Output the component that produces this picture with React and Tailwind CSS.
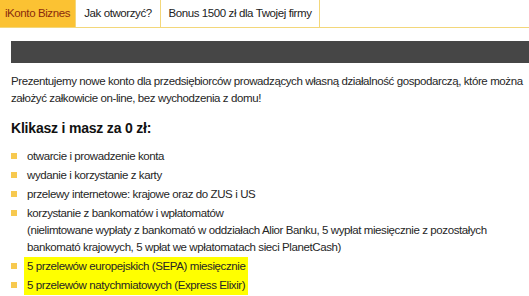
import React from 'react';

const tabs = [
  { label: 'iKonto Biznes', w: 'w-[76px]' },
  { label: 'Jak otworzyć?', w: 'w-[85px]' },
  { label: 'Bonus 1500 zł dla Twojej firmy', w: 'w-[159px]' },
];

const items = [
  { text: 'otwarcie i prowadzenie konta' },
  { text: 'wydanie i korzystanie z karty' },
  { text: 'przelewy internetowe: krajowe oraz do ZUS i US' },
  {
    text: 'korzystanie z bankomatów i wpłatomatów',
    note: '(nielimtowane wypłaty z bankomató w oddziałach Alior Banku, 5 wypłat miesięcznie z pozostałych bankomató krajowych, 5 wpłat we wpłatomatach sieci PlanetCash)',
  },
  { text: '5 przelewów europejskich (SEPA) miesięcznie', mark: true },
  { text: '5 przelewów natychmiatowych (Express Elixir)', mark: true },
];

export default function App() {
  return (
    <div
      className="w-[529px] h-[296px] bg-white overflow-hidden text-[11.5px] tracking-[-0.4px] text-[#262626]"
      style={{ fontFamily: '"Liberation Sans", Arial, sans-serif' }}
    >
      {/* Tabs */}
      <div className="flex h-[28px] border-b border-[#f3d77a]">
        {tabs.map((t, i) => (
          <div
            key={t.label}
            className={`${t.w} flex items-center justify-center border-r border-[#f3d77a] ${i === 0 ? 'bg-[#fbc233] text-[#8a2b0c]' : 'text-[#222]'}`}
          >
            {t.label}
          </div>
        ))}
      </div>

      <div className="pl-[11px]">
        <div className="mt-[13px] h-[22px] bg-[#464646]" />

        <p className="mt-[10px] pr-[2px] leading-[17px]">
          Prezentujemy nowe konto dla przedsiębiorców prowadzących własną działalność gospodarczą, które można założyć załkowicie on-line, bez wychodzenia z domu!
        </p>

        <h2 className="mt-[11px] text-[14px] tracking-[-0.2px] font-bold text-[#111]">Klikasz i masz za 0 zł:</h2>

        <ul className="mt-[8px] pr-[20px]">
          {items.map((it) => (
            <li key={it.text} className="flex">
              <span className="mt-[6px] mr-[10px] w-[6px] h-[6px] shrink-0 bg-[#f7c94f]" />
              <div className={`py-[1px] px-[3px] -ml-[3px] leading-[17px] ${it.mark ? 'bg-[#ffff00]' : ''}`}>
                <div>{it.text}</div>
                {it.note && <div>{it.note}</div>}
              </div>
            </li>
          ))}
        </ul>
      </div>
    </div>
  );
}
